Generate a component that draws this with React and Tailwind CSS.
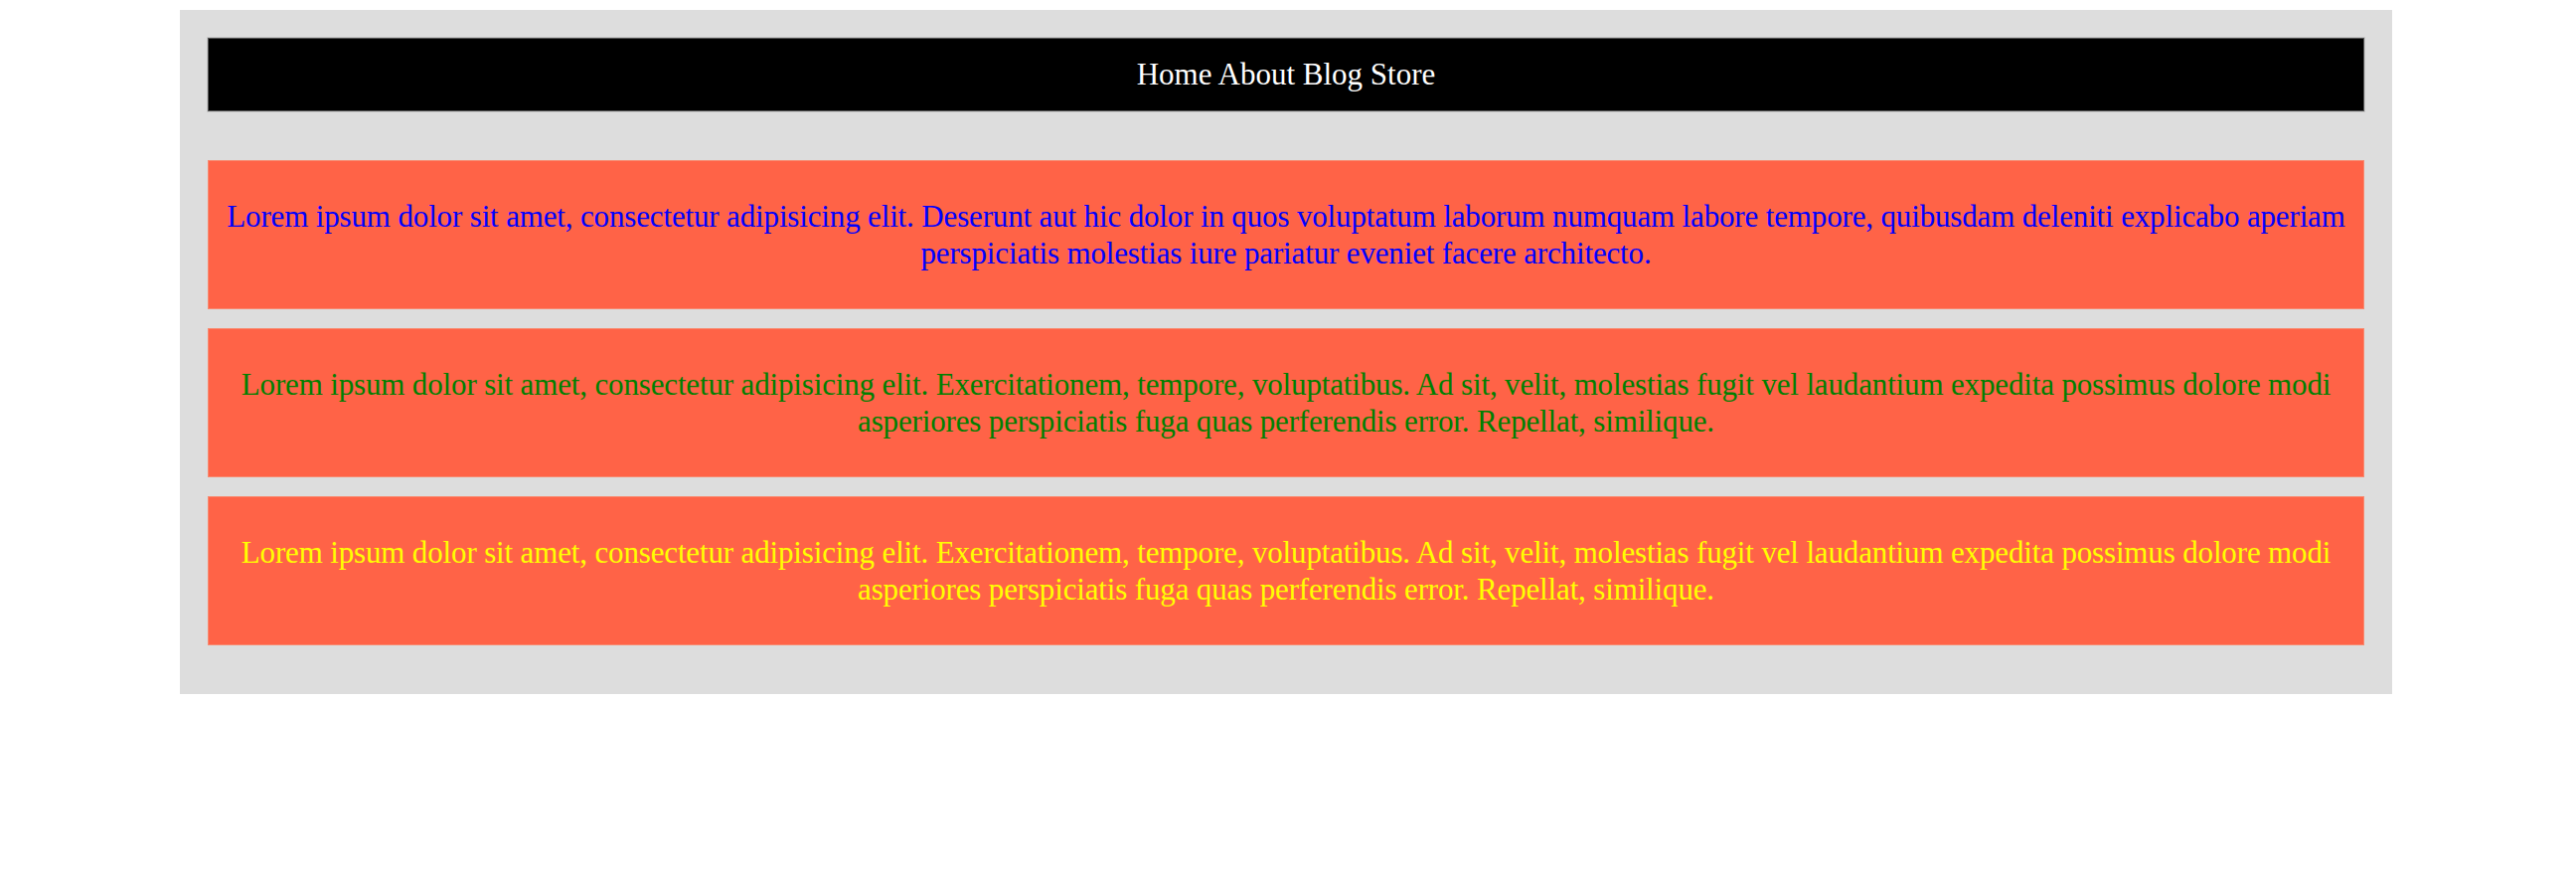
export default function App() {
  const serif = { fontFamily: '"Liberation Serif", "Times New Roman", serif' };
  const boxes = [
    {
      color: "text-[#0000ff]",
      text: "Lorem ipsum dolor sit amet, consectetur adipisicing elit. Deserunt aut hic dolor in quos voluptatum laborum numquam labore tempore, quibusdam deleniti explicabo aperiam perspiciatis molestias iure pariatur eveniet facere architecto.",
    },
    {
      color: "text-[#008000]",
      text: "Lorem ipsum dolor sit amet, consectetur adipisicing elit. Exercitationem, tempore, voluptatibus. Ad sit, velit, molestias fugit vel laudantium expedita possimus dolore modi asperiores perspiciatis fuga quas perferendis error. Repellat, similique.",
    },
    {
      color: "text-[#ffff00]",
      text: "Lorem ipsum dolor sit amet, consectetur adipisicing elit. Exercitationem, tempore, voluptatibus. Ad sit, velit, molestias fugit vel laudantium expedita possimus dolore modi asperiores perspiciatis fuga quas perferendis error. Repellat, similique.",
    },
  ];
  return (
    <div className="min-h-[887px] bg-white pt-[10px]" style={serif}>
      <div className="ml-[181px] w-[2226px] bg-[#dddddd] px-[28px] pt-[28px] pb-[49px] flex flex-col">
        <div className="h-[74px] bg-black border border-[#555555] outline outline-1 outline-[#c8c8c8] flex items-center justify-center text-white text-[31px]">
          Home About Blog Store
        </div>
        <div className="mt-[49px] flex flex-col gap-[19px]">
          {boxes.map((b, i) => (
            <div
              key={i}
              className={`bg-[#ff6347] border border-[#f88a70] py-[37px] px-[4px] text-center text-[31px] tracking-[-0.15px] leading-[37px] ${b.color}`}
            >
              {b.text}
            </div>
          ))}
        </div>
      </div>
    </div>
  );
}
